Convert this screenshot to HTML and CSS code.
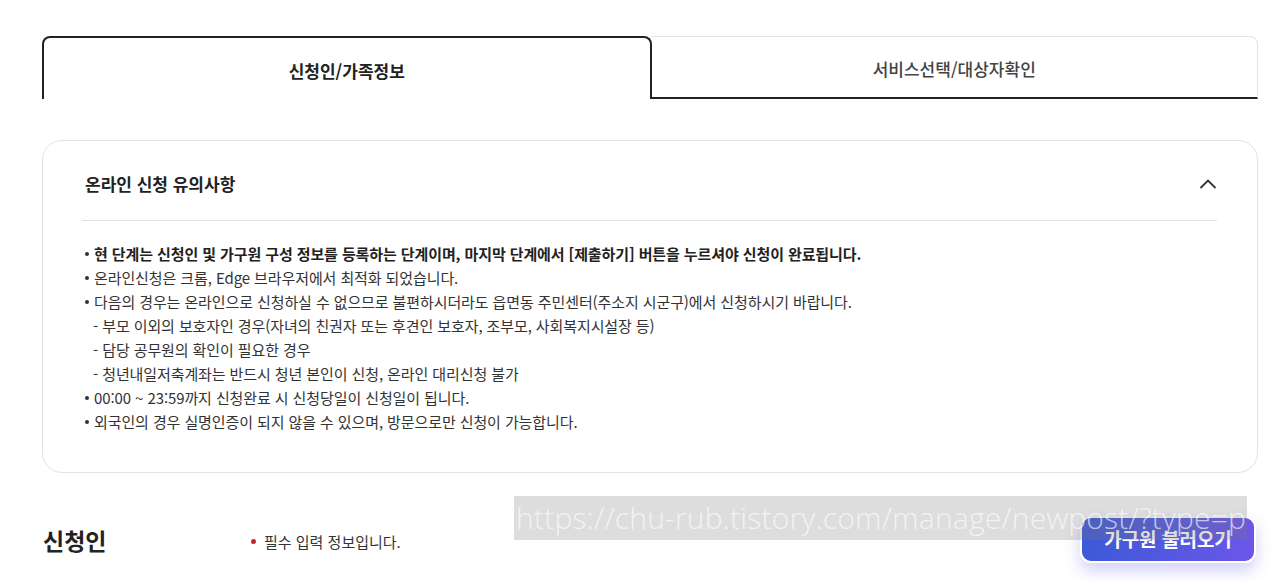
FILE: index.html
```html
<!DOCTYPE html>
<html lang="ko">
<head>
    <meta charset="UTF-8">
    <meta name="viewport" content="width=device-width, initial-scale=1.0">
    <title>신청인/가족정보</title>
    <link rel="stylesheet" href="styles.css">
</head>
<body>
    <div class="page">
        <div class="tabs">
            <div class="tab active">신청인/가족정보</div>
            <div class="tab">서비스선택/대상자확인</div>
        </div>

        <div class="notice">
            <div class="notice-head">
                <h3>온라인 신청 유의사항</h3>
                <svg class="chevron" width="18" height="10" viewBox="0 0 18 10">
                    <polyline points="1.5,9 9,1.5 16.5,9" fill="none" stroke="#333" stroke-width="1.8"/>
                </svg>
            </div>
            <ul class="notice-list">
                <li class="strong">현 단계는 신청인 및 가구원 구성 정보를 등록하는 단계이며, 마지막 단계에서 [제출하기] 버튼을 누르셔야 신청이 완료됩니다.</li>
                <li>온라인신청은 크롬, Edge 브라우저에서 최적화 되었습니다.</li>
                <li>다음의 경우는 온라인으로 신청하실 수 없으므로 불편하시더라도 읍면동 주민센터(주소지 시군구)에서 신청하시기 바랍니다.
                    <div class="sub">- 부모 이외의 보호자인 경우(자녀의 친권자 또는 후견인 보호자, 조부모, 사회복지시설장 등)</div>
                    <div class="sub">- 담당 공무원의 확인이 필요한 경우</div>
                    <div class="sub">- 청년내일저축계좌는 반드시 청년 본인이 신청, 온라인 대리신청 불가</div>
                </li>
                <li>00:00 ~ 23:59까지 신청완료 시 신청당일이 신청일이 됩니다.</li>
                <li>외국인의 경우 실명인증이 되지 않을 수 있으며, 방문으로만 신청이 가능합니다.</li>
            </ul>
        </div>

        <div class="section-head">
            <h2>신청인</h2>
            <p class="required"><span class="dot"></span>필수 입력 정보입니다.</p>
        </div>
    </div>

    <button class="family-btn">가구원 불러오기</button>
    <div class="watermark">https://chu-rub.tistory.com/manage/newpost/?type=p</div>
</body>
</html>
```

FILE: styles.css
```css
body {
    margin: 0;
    font-family: "Noto Sans CJK KR", "Noto Sans", sans-serif;
    color: #333;
    background: #fff;
    overflow: hidden;
}
.page {
    width: 1216px;
    margin-left: 42px;
    padding-top: 36px;
}
.tabs {
    display: flex;
    height: 63px;
}
.tab {
    flex: 1;
    display: flex;
    align-items: center;
    justify-content: center;
    font-size: 17px;
    font-weight: 500;
    color: #444;
    box-sizing: border-box;
    border: 1px solid #e4e4e4;
    border-left: none;
    border-bottom: 2px solid #222;
    border-radius: 0 8px 0 0;
    padding-top: 3px;
}
.tab.active {
    border: 2px solid #222;
    border-bottom: none;
    border-radius: 8px 8px 0 0;
    font-weight: 700;
    color: #222;
    padding-top: 4px;
}
.notice {
    margin-top: 41px;
    border: 1px solid #e2e2e2;
    border-radius: 20px;
    padding: 0 40px 38px 39px;
}
.notice-head {
    display: flex;
    align-items: center;
    justify-content: space-between;
    padding: 31px 0 24px 3px;
    border-bottom: 1px solid #e2e2e2;
}
.notice-head h3 {
    margin: 0;
    font-size: 17px;
    line-height: 24px;
    font-weight: 700;
    color: #222;
}
.notice-list {
    list-style: none;
    margin: 0;
    padding: 21px 0 0 3px;
    font-size: 15px;
    line-height: 24px;
    letter-spacing: -0.1px;
    color: #333;
}
.notice-list li {
    position: relative;
    padding-left: 9px;
}
.notice-list li::before {
    content: "";
    position: absolute;
    left: 0;
    top: 10px;
    width: 4px;
    height: 4px;
    border-radius: 50%;
    background: #333;
}
.notice-list li.strong {
    font-weight: 700;
    color: #222;
}
.notice-list .sub {
    margin-left: -1px;
}
.section-head {
    display: flex;
    align-items: center;
    margin-top: 52px;
}
.section-head h2 {
    margin: 0;
    width: 207px;
    font-size: 23px;
    font-weight: 700;
    color: #222;
    line-height: 30px;
    padding-left: 1px;
}
.required {
    margin: 0;
    font-size: 15px;
    color: #333;
    display: flex;
    align-items: center;
    padding-top: 2px;
}
.dot {
    width: 5px;
    height: 5px;
    border-radius: 50%;
    background: #d0202e;
    margin: 0 8px 0 1px;
}
.family-btn {
    position: absolute;
    left: 1080px;
    top: 516px;
    width: 176px;
    height: 47px;
    border: 2px solid #fff;
    border-radius: 11px;
    background: linear-gradient(90deg, #3c5ad8, #6c56e9);
    color: #fff;
    font-family: "Noto Sans CJK KR", sans-serif;
    font-size: 19px;
    font-weight: 700;
    box-shadow: 0 8px 16px rgba(100, 90, 230, 0.28);
    padding: 0 0 2px;
}
.watermark {
    position: absolute;
    left: 514px;
    top: 496px;
    width: 733px;
    height: 44px;
    background: rgba(120, 120, 120, 0.25);
    color: rgba(255, 255, 255, 0.65);
    font-family: "Open Sans", sans-serif;
    font-weight: 300;
    font-size: 30px;
    line-height: 44px;
    letter-spacing: 0.2px;
    white-space: nowrap;
    overflow: hidden;
    padding-left: 2px;
    box-sizing: border-box;
}
```
